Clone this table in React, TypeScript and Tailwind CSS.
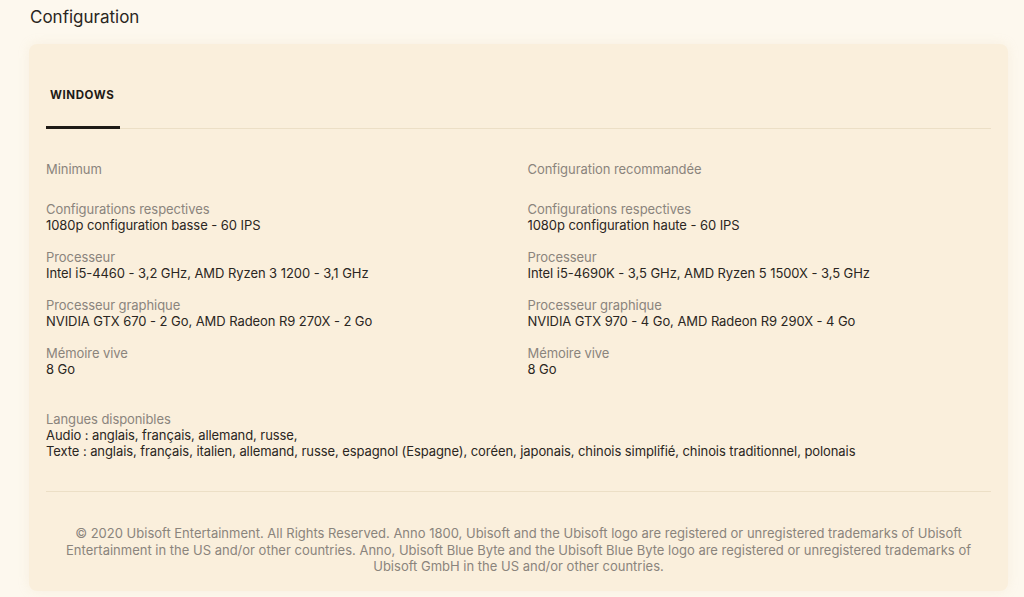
import React from "react";

const left = [
  { label: "Configurations respectives", value: "1080p configuration basse - 60 IPS" },
  { label: "Processeur", value: "Intel i5-4460 - 3,2 GHz, AMD Ryzen 3 1200 - 3,1 GHz" },
  { label: "Processeur graphique", value: "NVIDIA GTX 670 - 2 Go, AMD Radeon R9 270X - 2 Go" },
  { label: "Mémoire vive", value: "8 Go" },
];
const right = [
  { label: "Configurations respectives", value: "1080p configuration haute - 60 IPS" },
  { label: "Processeur", value: "Intel i5-4690K - 3,5 GHz, AMD Ryzen 5 1500X - 3,5 GHz" },
  { label: "Processeur graphique", value: "NVIDIA GTX 970 - 4 Go, AMD Radeon R9 290X - 4 Go" },
  { label: "Mémoire vive", value: "8 Go" },
];

function Column({ title, items }: { title: string; items: { label: string; value: string }[] }) {
  return (
    <div className="flex flex-col">
      <div className="text-[13px] leading-4 tracking-[-0.005em] text-[#8a847c]">{title}</div>
      <div className="mt-6 flex flex-col gap-4">
        {items.map((it) => (
          <div key={it.label} className="flex flex-col">
            <div className="text-[13px] leading-4 tracking-[-0.005em] text-[#8a847c]">{it.label}</div>
            <div className="text-[13px] leading-4 tracking-[-0.005em] text-[#2a2622]">{it.value}</div>
          </div>
        ))}
      </div>
    </div>
  );
}

export default function App() {
  return (
    <div
      className="min-h-[597px] w-[1024px] bg-[#fdf8ee] pl-[29px] pr-[16px] pt-[3px] pb-[9px]"
      style={{ fontFamily: "Inter, 'Noto Sans', sans-serif" }}
    >
      <h2 className="pl-px text-[17px] leading-7 text-[#2a2622]">Configuration</h2>
      <div className="mt-[13px] rounded-lg bg-[#faefdc] px-[17px] pt-[43px] pb-[16px] shadow-[0_0_12px_rgba(220,200,160,0.18)]">
        <div className="flex border-b border-[#ecdfc6]">
          <div className="w-[74px] border-b-[3px] border-[#1e1a16] px-1 pb-[23px] -mb-px text-[11.5px] font-bold leading-4 tracking-[0.05em] text-[#1e1a16]">
            WINDOWS
          </div>
        </div>
        <div className="mt-[32px] grid grid-cols-2 gap-[18px]">
          <Column title="Minimum" items={left} />
          <Column title="Configuration recommandée" items={right} />
        </div>
        <div className="mt-[34px] flex flex-col tracking-[-0.005em]">
          <div className="text-[13px] leading-4 text-[#8a847c]">Langues disponibles</div>
          <div className="text-[13px] leading-4 text-[#2a2622]">Audio : anglais, français, allemand, russe,</div>
          <div className="text-[13px] leading-4 text-[#2a2622]">
            Texte : anglais, français, italien, allemand, russe, espagnol (Espagne), coréen, japonais, chinois simplifié, chinois traditionnel, polonais
          </div>
        </div>
        <div className="mt-[32px] border-t border-[#ecdfc6]" />
        <p className="mx-auto mt-[33px] max-w-[910px] text-center text-[13px] leading-[16.5px] text-[#8a847c]">
          © 2020 Ubisoft Entertainment. All Rights Reserved. Anno 1800, Ubisoft and the Ubisoft logo are registered or unregistered trademarks of Ubisoft Entertainment in the US and/or other countries. Anno, Ubisoft Blue Byte and the Ubisoft Blue Byte logo are registered or unregistered trademarks of Ubisoft GmbH in the US and/or other countries.
        </p>
      </div>
    </div>
  );
}
